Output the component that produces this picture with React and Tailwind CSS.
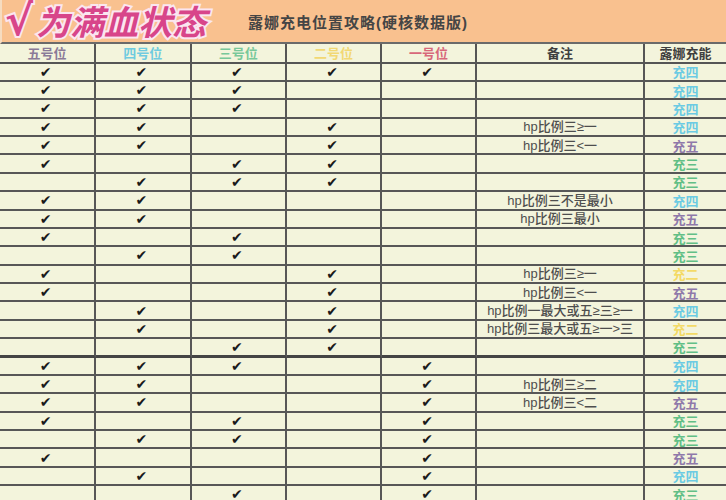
import React from "react";

const headers = [
  { t: "五号位", c: "text-[#8a7a98]" },
  { t: "四号位", c: "text-[#6fcbe0]" },
  { t: "三号位", c: "text-[#78c89a]" },
  { t: "二号位", c: "text-[#f2d873]" },
  { t: "一号位", c: "text-[#d8687a]" },
  { t: "备注", c: "text-[#3f3f3f]" },
  { t: "露娜充能", c: "text-[#3f3f3f]" },
];

const chargeColor = {
  充四: "text-[#6ccbe3]",
  充五: "text-[#8f79aa]",
  充三: "text-[#62bf86]",
  充二: "text-[#f3da66]",
};

// [5,4,3,2,1], note, charge
const rows = [
  ["11111", "", "充四"],
  ["11100", "", "充四"],
  ["11100", "", "充四"],
  ["11010", "hp比例三≥一", "充四"],
  ["11010", "hp比例三<一", "充五"],
  ["10110", "", "充三"],
  ["01110", "", "充三"],
  ["11000", "hp比例三不是最小", "充四"],
  ["11000", "hp比例三最小", "充五"],
  ["10100", "", "充三"],
  ["01100", "", "充三"],
  ["10010", "hp比例三≥一", "充二"],
  ["10010", "hp比例三<一", "充五"],
  ["01010", "hp比例一最大或五≥三≥一", "充四"],
  ["01010", "hp比例三最大或五≥一>三", "充二"],
  ["00110", "", "充三"],
  ["11101", "", "充四"],
  ["11001", "hp比例三≥二", "充四"],
  ["11001", "hp比例三<二", "充五"],
  ["10101", "", "充三"],
  ["01101", "", "充三"],
  ["10001", "", "充五"],
  ["01001", "", "充四"],
  ["00101", "", "充三"],
];

const cjk = "font-['Liberation_Sans','Noto_Sans_CJK_SC',sans-serif]";

export default function App() {
  return (
    <div className={`w-[726px] h-[500px] overflow-hidden bg-[#f3f4dc] ${cjk}`}>
      {/* Title bar */}
      <div className="h-[44px] bg-[#f9c18f] border-b-2 border-[#6a6a6a] border-l-2 border-l-[#f6dcc0] flex items-center">
        <div className="pl-[3px] w-[246px] h-[40px] flex items-center leading-[40px] font-bold italic text-[#d8458a] [paint-order:stroke_fill] [-webkit-text-stroke:4px_#fbe6f0]">
          <span className="text-[42px] leading-[40px] font-['DejaVu_Sans',sans-serif] mr-[3px]">√</span>
          <span className="text-[34px] leading-[40px] font-['Noto_Sans_CJK_SC',sans-serif]">为满血状态</span>
        </div>
        <div className="text-[15px] font-bold text-[#454545] tracking-[1px] leading-[20px] mt-[3px]">
          露娜充电位置攻略(硬核数据版)
        </div>
      </div>
      {/* Table */}
      <div className="grid grid-cols-[96px_95.5px_95.5px_95px_95px_168px_81px]">
        {headers.map((h, i) => (
          <div
            key={i}
            className={`h-[19.5px] flex items-center justify-center border-b-2 border-[#555] ${
              i < 6 ? "border-r-2" : ""
            } font-bold text-[13px] leading-none ${h.c} font-['Noto_Sans_CJK_SC',serif]`}
          >
            {h.t}
          </div>
        ))}
        {rows.map((r, ri) => {
          const thick = ri === 15;
          const bb = thick ? "border-b-[3px] border-b-[#444]" : "border-b-2";
          return (
            <React.Fragment key={ri}>
              {r[0].split("").map((v, ci) => (
                <div
                  key={ci}
                  className={`h-[18.375px] flex items-center justify-center border-r-2 border-[#575757] ${bb} pr-[3px]`}
                >
                  {v === "1" ? (
                    <span className="text-[14px] leading-none text-[#1a1a1a] font-['DejaVu_Sans',sans-serif]">
                      ✔
                    </span>
                  ) : null}
                </div>
              ))}
              <div
                className={`h-[18.375px] flex items-center justify-center border-r-2 border-[#575757] ${bb} text-[13px] leading-none text-[#4e4e4e] font-medium`}
              >
                {r[1]}
              </div>
              <div
                className={`h-[18.375px] flex items-center justify-center border-[#575757] ${bb} text-[13px] leading-none font-bold ${chargeColor[r[2]]} font-['Noto_Sans_CJK_SC',serif]`}
              >
                {r[2]}
              </div>
            </React.Fragment>
          );
        })}
      </div>
    </div>
  );
}
